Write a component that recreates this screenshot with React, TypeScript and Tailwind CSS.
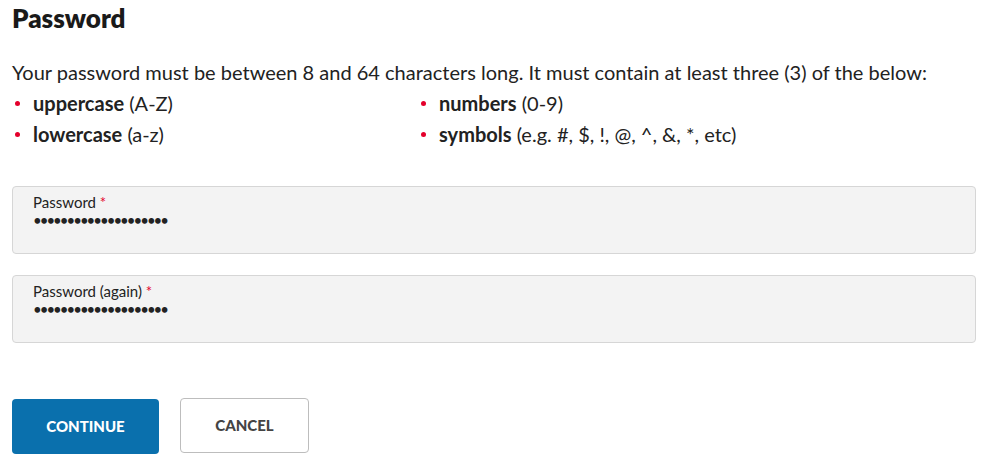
export default function App() {
  const rules = [
    { bold: 'uppercase', rest: '(A-Z)' },
    { bold: 'numbers', rest: '(0-9)' },
    { bold: 'lowercase', rest: '(a-z)' },
    { bold: 'symbols', rest: '(e.g. #, $, !, @, ^, &, *, etc)' },
  ]

  const fields = ['Password', 'Password (again)']

  return (
    <div className="w-[1000px] h-[472px] bg-white px-3 pt-[1px] text-[#222] font-['Lato',sans-serif]">
      <h1 className="text-[26px] leading-[34px] font-extrabold text-[#1a1a1a]">Password</h1>

      <p className="mt-[22px] text-[20px] leading-[31px]">
        Your password must be between 8 and 64 characters long. It must contain at least three (3) of the below:
      </p>

      <ul className="grid grid-cols-[406px_1fr] text-[20px] leading-[31px]">
        {rules.map((r) => (
          <li key={r.bold} className="flex items-center">
            <span className="w-[5px] h-[5px] rounded-full bg-[#e4002b] ml-[3px] mr-[13px]" />
            <span>
              <b className="font-bold">{r.bold}</b> {r.rest}
            </span>
          </li>
        ))}
      </ul>

      <div className="mt-[36px] w-[964px] flex flex-col gap-[21px]">
        {fields.map((label) => (
          <div
            key={label}
            className="h-[68px] rounded-[4px] border border-[#d6d6d6] bg-[#f3f3f3] pl-[20px] pt-[5px]"
          >
            <div className="text-[15px] leading-[20px] text-[#222]">
              {label} <span className="text-[#e4002b]">*</span>
            </div>
            <div className="text-[15px] leading-[14px] tracking-[-2px] text-[#222] mt-[1px]">
              ••••••••••••••••••••
            </div>
          </div>
        ))}
      </div>

      <div className="mt-[56px] flex gap-[21px]">
        <button className="w-[147px] h-[55px] rounded-[4px] bg-[#0a70ad] text-white text-[15px] font-black">
          CONTINUE
        </button>
        <button className="w-[129px] h-[55px] -mt-px rounded-[4px] border border-[#bdbdbd] bg-white text-[#444] text-[15px] font-black">
          CANCEL
        </button>
      </div>
    </div>
  )
}
